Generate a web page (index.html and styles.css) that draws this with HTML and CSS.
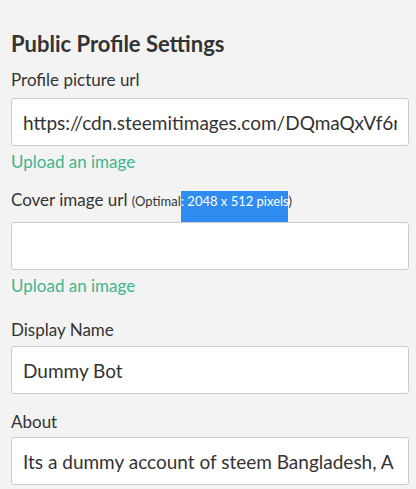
FILE: index.html
```html
<!DOCTYPE html>
<html lang="en">
<head>
    <meta charset="UTF-8">
    <meta name="viewport" content="width=device-width, initial-scale=1.0">
    <title>Public Profile Settings</title>
    <link rel="stylesheet" href="styles.css">
</head>
<body>
    <div class="settings">
        <h3>Public Profile Settings</h3>

        <label class="field-label">Profile picture url</label>
        <input type="text" class="field-input" value="https://cdn.steemitimages.com/DQmaQxVf6nX3Jz">
        <a href="#" class="upload-link">Upload an image</a>

        <label class="field-label cover-label">Cover image url <span class="hint">(Optimal<span class="selected">: 2048 x 512 pixels</span>)</span></label>
        <input type="text" class="field-input" value="">
        <a href="#" class="upload-link">Upload an image</a>

        <label class="field-label name-label">Display Name</label>
        <input type="text" class="field-input" value="Dummy Bot">

        <label class="field-label about-label">About</label>
        <input type="text" class="field-input" value="Its a dummy account of steem Bangladesh, A test bot">
    </div>
</body>
</html>
```

FILE: styles.css
```css
body {
    font-family: Lato, "Open Sans", sans-serif;
    background-color: #f3f3f3;
    color: #333;
    margin: 0;
    padding: 0;
}

.settings {
    padding: 30px 7px 0 11px;
}

h3 {
    font-size: 22px;
    font-weight: bold;
    line-height: 28px;
    margin: 0 0 10px;
}

.field-label {
    display: block;
    font-size: 17px;
    line-height: 24px;
    margin-bottom: 6px;
}

.field-input {
    display: block;
    box-sizing: border-box;
    width: 100%;
    height: 48px;
    padding: 0 11px;
    font-family: inherit;
    font-size: 19px;
    color: #333;
    background-color: #fff;
    border: 1px solid #ccc;
    border-radius: 3px;
    outline: none;
}

.upload-link {
    display: block;
    font-size: 17px;
    line-height: 24px;
    color: #3fb58b;
    text-decoration: none;
    margin-top: 4px;
}

.cover-label {
    margin-top: 14px;
    margin-bottom: 9px;
}

.hint {
    font-size: 13px;
}

.selected {
    background-color: #2e8cf0;
    color: #fff;
    padding: 2px 0 13px;
}

.name-label {
    margin-top: 20px;
    margin-bottom: 4px;
}

.about-label {
    margin-top: 16px;
    margin-bottom: 3px;
}
```
